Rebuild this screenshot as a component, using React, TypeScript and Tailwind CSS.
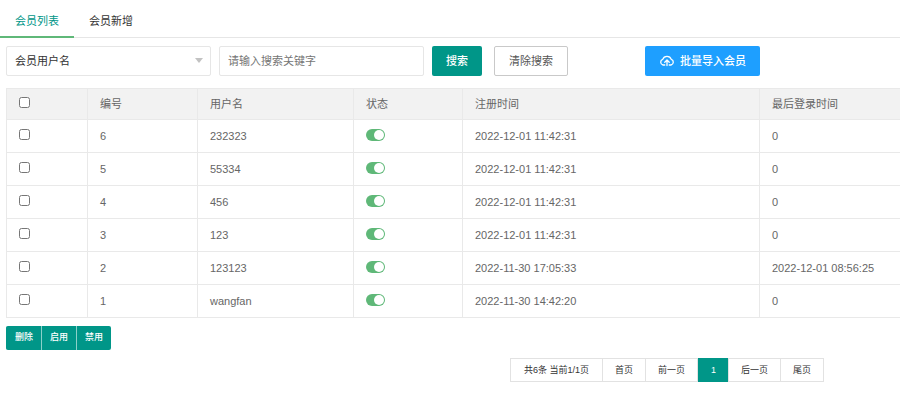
import { useState } from "react";

interface Member {
  id: number;
  username: string;
  enabled: boolean;
  registeredAt: string;
  lastLogin: string;
}

const MEMBERS: Member[] = [
  { id: 6, username: "232323",  enabled: true, registeredAt: "2022-12-01 11:42:31", lastLogin: "0" },
  { id: 5, username: "55334",   enabled: true, registeredAt: "2022-12-01 11:42:31", lastLogin: "0" },
  { id: 4, username: "456",     enabled: true, registeredAt: "2022-12-01 11:42:31", lastLogin: "0" },
  { id: 3, username: "123",     enabled: true, registeredAt: "2022-12-01 11:42:31", lastLogin: "0" },
  { id: 2, username: "123123",  enabled: true, registeredAt: "2022-11-30 17:05:33", lastLogin: "2022-12-01 08:56:25" },
  { id: 1, username: "wangfan", enabled: true, registeredAt: "2022-11-30 14:42:20", lastLogin: "0" },
];

const TABS = ["会员列表", "会员新增"];
const BULK_ACTIONS = ["删除", "启用", "禁用"];

// ─── Tabs ──────────────────────────────────────────────────────────────────

function TabBar() {
  const [active, setActive] = useState(TABS[0]);

  return (
    <nav className="flex h-[38px] border-b border-[#e6e6e6] pt-1">
      {TABS.map((tab) => (
        <a
          key={tab}
          href="#"
          onClick={() => setActive(tab)}
          className={`-mb-px border-b-2 px-[15px] leading-[34px] ${
            active === tab
              ? "border-[#5fb878] text-[#009688]"
              : "border-transparent text-[#333]"
          }`}
        >
          {tab}
        </a>
      ))}
    </nav>
  );
}

// ─── Search bar ────────────────────────────────────────────────────────────

function CloudUploadIcon() {
  return (
    <svg
      viewBox="0 0 32 24"
      className="h-3 w-4"
      fill="none"
      stroke="currentColor"
      strokeWidth="2.6"
      strokeLinecap="round"
      strokeLinejoin="round"
      aria-hidden="true"
    >
      <path d="M11.5 20H8A5.8 5.8 0 0 1 7.5 8.8A9 9 0 0 1 24.5 8.8A5.8 5.8 0 0 1 24 20H20.5" />
      <path d="M16 21V11M11.5 14.5L16 10l4.5 4.5" />
    </svg>
  );
}

function SearchBar() {
  const [keyword, setKeyword] = useState("");

  return (
    <form
      className="flex h-[30px] items-stretch"
      onSubmit={(e) => e.preventDefault()}
    >
      <div className="relative w-[205px]">
        <select
          aria-label="搜索字段"
          className="size-full appearance-none rounded-xs border border-[#e6e6e6] bg-white px-2 text-[#333]"
        >
          <option>会员用户名</option>
        </select>
        <span className="pointer-events-none absolute top-3 right-2 border-x-4 border-t-5 border-x-transparent border-t-[#c2c2c2]" />
      </div>
      <input
        type="text"
        aria-label="搜索关键字"
        placeholder="请输入搜索关键字"
        value={keyword}
        onChange={(e) => setKeyword(e.target.value)}
        className="ml-2 w-[205px] rounded-xs border border-[#e6e6e6] px-2 placeholder:text-[#757575]"
      />
      <button type="submit" className="ml-2 rounded-xs bg-[#009688] px-3.5 font-medium text-white">
        搜索
      </button>
      <button
        type="button"
        onClick={() => setKeyword("")}
        className="ml-3 rounded-xs border border-[#c9c9c9] bg-white px-3.5 text-[#555]"
      >
        清除搜索
      </button>
      <button
        type="button"
        className="ml-[77px] flex items-center gap-[5px] rounded-xs bg-[#1e9fff] px-3.5 font-medium text-white"
      >
        <CloudUploadIcon />
        批量导入会员
      </button>
    </form>
  );
}

// ─── Member table ──────────────────────────────────────────────────────────

function MemberTable() {
  const [selected, setSelected] = useState<number[]>([]);

  const toggle = (id: number) =>
    setSelected((ids) => (ids.includes(id) ? ids.filter((i) => i !== id) : [...ids, id]));

  return (
    <table className="w-full table-fixed border-collapse text-left text-[#666]">
      <colgroup>
        <col className="w-[81px]" />
        <col className="w-[110px]" />
        <col className="w-[156px]" />
        <col className="w-[109px]" />
        <col className="w-[297px]" />
        <col />
      </colgroup>
      <thead className="bg-[#f2f2f2]">
        <tr className="h-[31px]">
          <Th>
            <input
              type="checkbox"
              aria-label="全选"
              checked={selected.length === MEMBERS.length}
              onChange={(e) => setSelected(e.target.checked ? MEMBERS.map((m) => m.id) : [])}
              className="mb-[3px] block size-[11px]"
            />
          </Th>
          <Th>编号</Th>
          <Th>用户名</Th>
          <Th>状态</Th>
          <Th>注册时间</Th>
          <Th>最后登录时间</Th>
        </tr>
      </thead>
      <tbody>
        {MEMBERS.map((m) => (
          <tr key={m.id} className="h-[33px]">
            <Td>
              <input
                type="checkbox"
                aria-label={`选择 ${m.username}`}
                checked={selected.includes(m.id)}
                onChange={() => toggle(m.id)}
                className="mb-[3px] block size-[11px]"
              />
            </Td>
            <Td>{m.id}</Td>
            <Td>{m.username}</Td>
            <Td>
              <input
                type="checkbox"
                role="switch"
                aria-label={`${m.username} 状态`}
                defaultChecked={m.enabled}
                className="mb-[3px] flex h-3 w-[19px] appearance-none items-center rounded-full bg-[#c2c2c2] px-px before:size-2.5 before:rounded-full before:bg-white checked:justify-end checked:bg-[#5fb878]"
              />
            </Td>
            <Td>{m.registeredAt}</Td>
            <Td>{m.lastLogin}</Td>
          </tr>
        ))}
      </tbody>
    </table>
  );
}

function Th({ children }: { children: React.ReactNode }) {
  return <th className="border border-r-0 border-[#e9e9e9] px-3 font-normal">{children}</th>;
}
function Td({ children }: { children: React.ReactNode }) {
  return <td className="border border-r-0 border-[#e9e9e9] px-3">{children}</td>;
}

// ─── Footer ────────────────────────────────────────────────────────────────

function BulkActions() {
  return (
    <div className="flex h-6 text-[9px]">
      {BULK_ACTIONS.map((action) => (
        <button
          key={action}
          type="button"
          className="border-l border-[#8cd0c9] bg-[#009688] px-2 font-medium text-white first:rounded-l-xs first:border-[#009688] last:rounded-r-xs"
        >
          {action}
        </button>
      ))}
    </div>
  );
}

function PageLink({ children }: { children: React.ReactNode }) {
  return (
    <a href="#" className="-ml-px border border-[#e2e2e2] px-3">
      {children}
    </a>
  );
}

function Pagination() {
  return (
    <nav
      aria-label="分页"
      className="flex h-6 justify-end pr-[76px] text-[9px] leading-[22px] text-[#333]"
    >
      <span className="border border-[#e2e2e2] px-[13px]">共6条 当前1/1页</span>
      <PageLink>首页</PageLink>
      <PageLink>前一页</PageLink>
      <span aria-current="page" className="border border-[#009688] bg-[#009688] px-3 font-medium text-white">
        1
      </span>
      <PageLink>后一页</PageLink>
      <PageLink>尾页</PageLink>
    </nav>
  );
}

export default function App() {
  return (
    <div className="min-h-screen bg-white font-['Liberation_Sans','Noto_Sans_CJK_SC',sans-serif] text-[11px]">
      <TabBar />
      <main className="flex flex-col gap-2 pt-2 pl-1.5">
        <SearchBar />
        <div className="pt-1">
          <MemberTable />
        </div>
        <BulkActions />
        <Pagination />
      </main>
    </div>
  );
}
